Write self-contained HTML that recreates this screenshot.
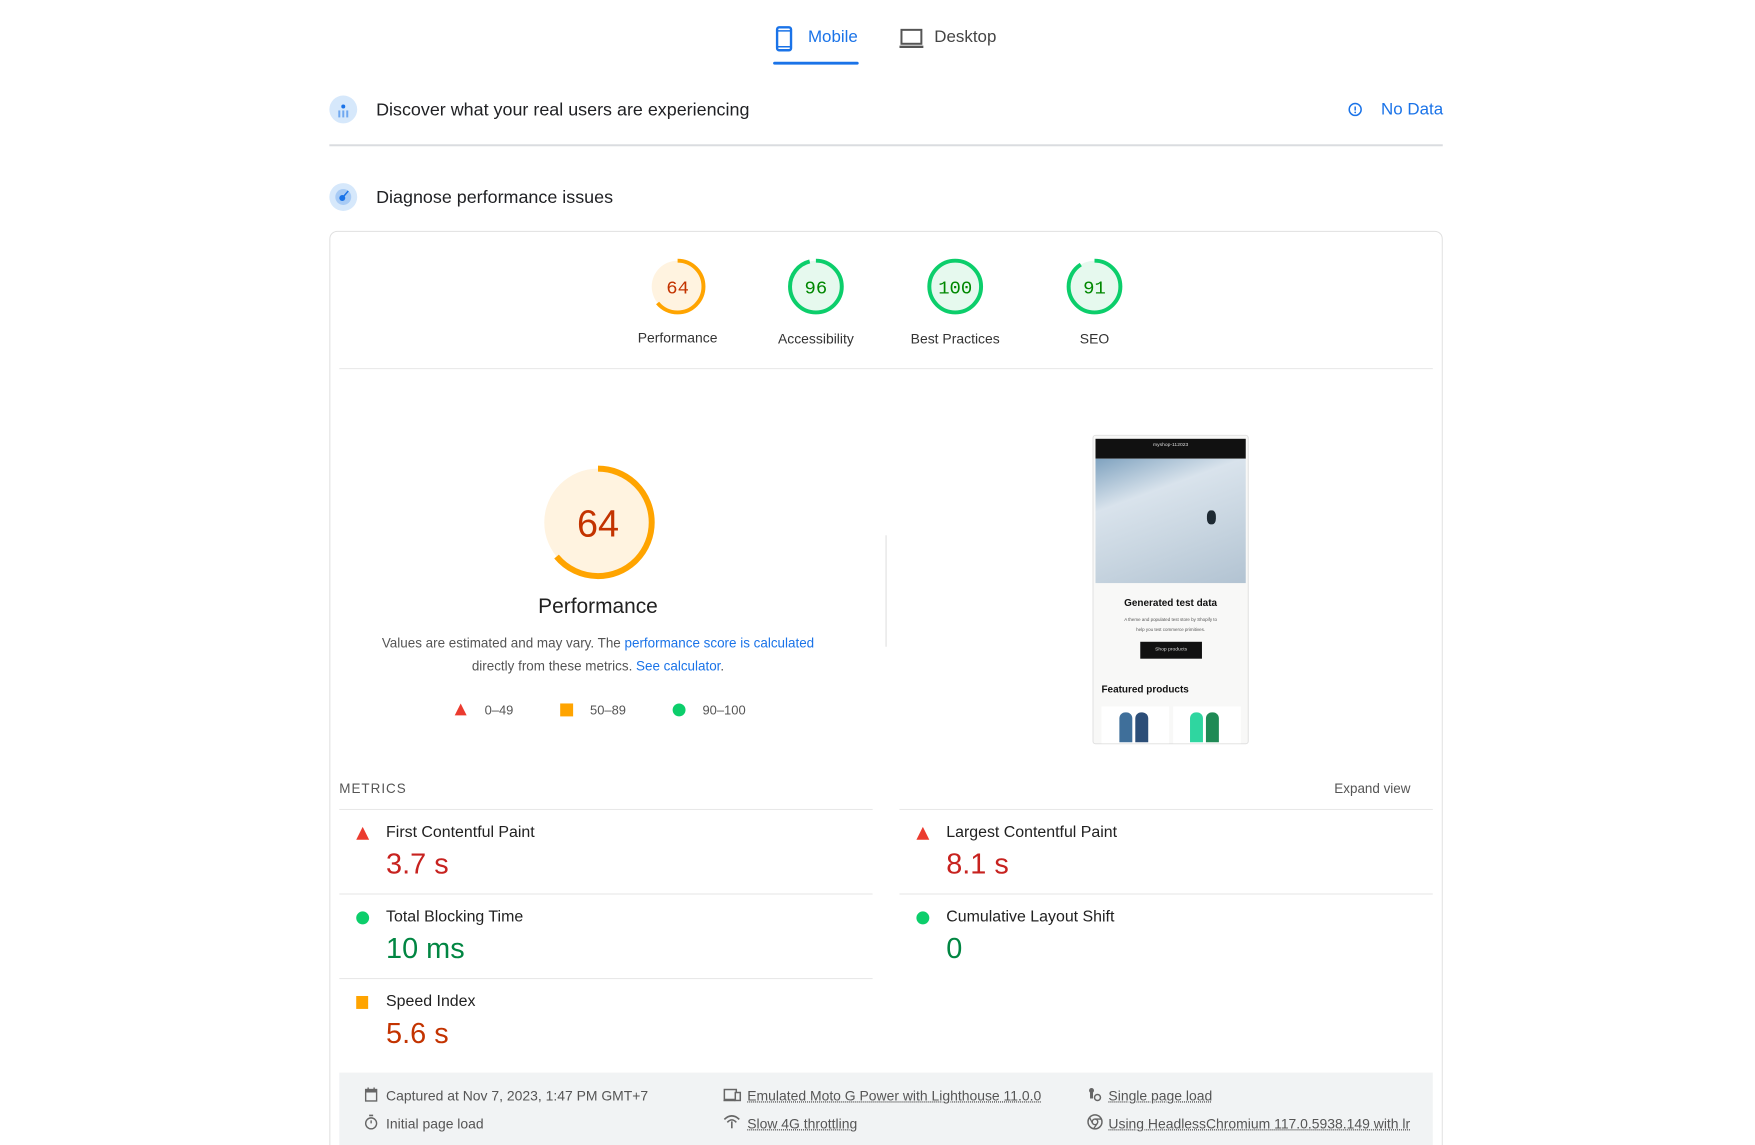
<!DOCTYPE html>
<html style="width:1755px;height:1145px;overflow:hidden"><head><meta charset="utf-8"><style>
*{margin:0;padding:0;box-sizing:border-box}
body{width:1755px;height:1145px;overflow:hidden;background:#fff;font-family:"Liberation Sans",Arial,sans-serif;color:#202124;position:relative}
#w{position:absolute;left:0;top:0;width:1765px;height:1151px;transform:scale(0.995);transform-origin:0 0}
.a{position:absolute;white-space:nowrap}
.lbl{font-size:14px;color:#333;transform:translateX(-50%)}
.mt{font-size:16px;color:#212121}
.mv{font-size:29px}
.hr{position:absolute;height:1px;background:#e6e6e6}
.ft{font-size:14px;color:#555}
.u{text-decoration:underline;text-decoration-style:dotted}
</style></head><body><div id="w">
<svg class="a" style="left:779px;top:26px" width="18" height="26" viewBox="0 0 18 26"><rect x="2" y="1.5" width="14" height="23" rx="2" fill="none" stroke="#1a73e8" stroke-width="2.4"/><line x1="2" y1="5" x2="16" y2="5" stroke="#1a73e8" stroke-width="1.5"/><line x1="2" y1="21" x2="16" y2="21" stroke="#1a73e8" stroke-width="1.5"/></svg>
<div class="a" style="left:812px;top:27px;font-size:17px;color:#1a73e8">Mobile</div>
<div class="a" style="left:777px;top:62px;width:86px;height:3px;background:#1a73e8;border-radius:2px"></div>
<svg class="a" style="left:903px;top:28px" width="26" height="22" viewBox="0 0 26 22"><rect x="3" y="2" width="20" height="14" fill="none" stroke="#555" stroke-width="2"/><line x1="1" y1="19" x2="25" y2="19" stroke="#555" stroke-width="2.4"/></svg>
<div class="a" style="left:939px;top:27px;font-size:17px;color:#444">Desktop</div>
<div class="a" style="left:331px;top:96px;width:28px;height:28px;border-radius:50%;background:#d6e8fb"></div>
<svg class="a" style="left:331px;top:96px" width="28" height="28"><circle cx="14" cy="11" r="2" fill="#1a73e8"/><rect x="9" y="15" width="2" height="7" fill="#6fa8f0"/><rect x="13" y="15" width="2" height="7" fill="#6fa8f0"/><rect x="17" y="15" width="2" height="7" fill="#6fa8f0"/></svg>
<div class="a" style="left:378px;top:100px;font-size:18px;color:#202124">Discover what your real users are experiencing</div>
<svg class="a" style="left:1354px;top:102px" width="16" height="16"><circle cx="8" cy="8" r="6" fill="none" stroke="#1a73e8" stroke-width="1.5"/><line x1="8" y1="5" x2="8" y2="9" stroke="#1a73e8" stroke-width="1.5"/><circle cx="8" cy="11" r="0.9" fill="#1a73e8"/></svg>
<div class="a" style="left:1388px;top:100px;font-size:17px;color:#1a73e8">No Data</div>
<div class="a" style="left:331px;top:145px;width:1119px;height:2px;background:#dadce0"></div>
<div class="a" style="left:331px;top:184px;width:28px;height:28px;border-radius:50%;background:#d6e8fb"></div>
<svg class="a" style="left:331px;top:184px" width="28" height="28"><circle cx="14" cy="14" r="8" fill="#a8cbf5"/><circle cx="13" cy="15" r="3" fill="#1a73e8"/><line x1="13" y1="15" x2="19" y2="8" stroke="#1a73e8" stroke-width="1.5"/></svg>
<div class="a" style="left:378px;top:188px;font-size:18px;color:#202124">Diagnose performance issues</div>
<div class="a" style="left:331px;top:232px;width:1119px;height:940px;border:1px solid #e0e0e0;border-radius:8px"></div>
<svg class="a" style="left:0;top:0" width="1755" height="620">
<g font-family="Liberation Mono,monospace" font-size="19" text-anchor="middle">
<circle cx="681" cy="288" r="26" fill="#fff3e0"/><circle cx="681" cy="288" r="26" fill="none" stroke="#ffa400" stroke-width="4" stroke-dasharray="104.5 200" transform="rotate(-90 681 288)"/><text x="681" y="295" fill="#c33300">64</text>
<circle cx="820" cy="288" r="26" fill="#e6f9ee"/><circle cx="820" cy="288" r="26" fill="none" stroke="#0cce6b" stroke-width="4" stroke-dasharray="156.8 200" transform="rotate(-90 820 288)"/><text x="820" y="295" fill="#008800">96</text>
<circle cx="960" cy="288" r="26" fill="#e6f9ee"/><circle cx="960" cy="288" r="26" fill="none" stroke="#0cce6b" stroke-width="4"/><text x="960" y="295" fill="#008800">100</text>
<circle cx="1100" cy="288" r="26" fill="#e6f9ee"/><circle cx="1100" cy="288" r="26" fill="none" stroke="#0cce6b" stroke-width="4" stroke-dasharray="148.6 200" transform="rotate(-90 1100 288)"/><text x="1100" y="295" fill="#008800">91</text>
</g>
<circle cx="601" cy="525" r="54" fill="#fff3e0"/><circle cx="601" cy="525" r="54" fill="none" stroke="#ffa400" stroke-width="6" stroke-dasharray="217 400" transform="rotate(-90 601 525)"/>
<text x="601" y="539" text-anchor="middle" font-family="Liberation Sans,sans-serif" font-size="38" fill="#c33300">64</text>
</svg>
<div class="a lbl" style="left:681px;top:331px">Performance</div>
<div class="a lbl" style="left:820px;top:332px">Accessibility</div>
<div class="a lbl" style="left:960px;top:332px">Best Practices</div>
<div class="a lbl" style="left:1100px;top:332px">SEO</div>
<div class="hr" style="left:341px;top:370px;width:1099px"></div>
<div class="a" style="left:601px;top:598px;transform:translateX(-50%);font-size:21px;color:#212121">Performance</div>
<div class="a" style="left:601px;top:639px;transform:translateX(-50%);font-size:13.5px;color:#555">Values are estimated and may vary. The <span style="color:#1a73e8">performance score is calculated</span></div>
<div class="a" style="left:601px;top:662px;transform:translateX(-50%);font-size:13.5px;color:#555">directly from these metrics. <span style="color:#1a73e8">See calculator</span>.</div>
<svg class="a" style="left:456px;top:706px" width="14" height="14"><polygon points="7,1 13,13 1,13" fill="#eb3b2f"/></svg>
<div class="a" style="left:487px;top:706px;font-size:13px;color:#555">0–49</div>
<div class="a" style="left:563px;top:707px;width:13px;height:13px;background:#ffa400"></div>
<div class="a" style="left:593px;top:706px;font-size:13px;color:#555">50–89</div>
<div class="a" style="left:676px;top:707px;width:13px;height:13px;border-radius:50%;background:#0cce6b"></div>
<div class="a" style="left:706px;top:706px;font-size:13px;color:#555">90–100</div>
<div class="a" style="left:890px;top:538px;width:1px;height:112px;background:#ddd"></div>
<div class="a" style="left:1098px;top:437px;width:157px;height:311px;border:1px solid #e0e0e0;border-radius:3px;background:#f8f8f7;overflow:hidden">
 <div class="a" style="left:2px;top:3px;width:151px;height:20px;background:#111"></div>
 <div class="a" style="left:0;top:6px;width:155px;text-align:center;font-size:5px;color:#ddd">myshop-112023</div>
 <div class="a" style="left:2px;top:23px;width:151px;height:125px;background:linear-gradient(160deg,#7fa2bf 0%,#d9e3ec 30%,#c9d6e1 60%,#b2c3d2 100%)"></div>
 <div class="a" style="left:114px;top:75px;width:9px;height:14px;background:#1e2a33;border-radius:40%"></div>
 <div class="a" style="left:0;top:163px;width:155px;text-align:center;font-size:10px;font-weight:bold;color:#111">Generated test data</div>
 <div class="a" style="left:0;top:180px;width:155px;text-align:center;font-size:4.5px;color:#555;line-height:10px">A theme and populated test store by Shopify to<br>help you test commerce primitives.</div>
 <div class="a" style="left:47px;top:207px;width:62px;height:17px;background:#111"></div>
 <div class="a" style="left:47px;top:212px;width:62px;text-align:center;font-size:5px;color:#ddd">Shop products</div>
 <div class="a" style="left:8px;top:250px;font-size:10px;font-weight:bold;color:#111">Featured products</div>
 <div class="a" style="left:8px;top:272px;width:68px;height:40px;background:#fff"></div>
 <div class="a" style="left:80px;top:272px;width:68px;height:40px;background:#fff"></div>
 <div class="a" style="left:26px;top:278px;width:13px;height:30px;border-radius:6px 6px 0 0;background:#3f6f9a"></div>
 <div class="a" style="left:42px;top:278px;width:13px;height:30px;border-radius:6px 6px 0 0;background:#2c4e78"></div>
 <div class="a" style="left:97px;top:278px;width:13px;height:30px;border-radius:6px 6px 0 0;background:#2fd6a0"></div>
 <div class="a" style="left:113px;top:278px;width:13px;height:30px;border-radius:6px 6px 0 0;background:#1f8a55"></div>
</div>
<div class="a" style="left:341px;top:785px;font-size:13.5px;color:#555;letter-spacing:1px">METRICS</div>
<div class="a" style="left:1341px;top:785px;font-size:13.5px;color:#555">Expand view</div>
<div class="hr" style="left:341px;top:813px;width:536px"></div>
<div class="hr" style="left:904px;top:813px;width:536px"></div>
<div class="hr" style="left:341px;top:898px;width:536px"></div>
<div class="hr" style="left:904px;top:898px;width:536px"></div>
<div class="hr" style="left:341px;top:983px;width:536px"></div>
<svg class="a" style="left:357px;top:830px" width="15" height="15"><polygon points="7.5,1 14,14 1,14" fill="#eb3b2f"/></svg>
<div class="a mt" style="left:388px;top:828px">First Contentful Paint</div>
<div class="a mv" style="left:388px;top:853px;color:#c7221f">3.7 s</div>
<svg class="a" style="left:920px;top:830px" width="15" height="15"><polygon points="7.5,1 14,14 1,14" fill="#eb3b2f"/></svg>
<div class="a mt" style="left:951px;top:828px">Largest Contentful Paint</div>
<div class="a mv" style="left:951px;top:853px;color:#c7221f">8.1 s</div>
<div class="a" style="left:358px;top:916px;width:13px;height:13px;border-radius:50%;background:#0cce6b"></div>
<div class="a mt" style="left:388px;top:913px">Total Blocking Time</div>
<div class="a mv" style="left:388px;top:938px;color:#018642">10 ms</div>
<div class="a" style="left:921px;top:916px;width:13px;height:13px;border-radius:50%;background:#0cce6b"></div>
<div class="a mt" style="left:951px;top:913px">Cumulative Layout Shift</div>
<div class="a mv" style="left:951px;top:938px;color:#018642">0</div>
<div class="a" style="left:358px;top:1001px;width:12px;height:13px;background:#ffa400"></div>
<div class="a mt" style="left:388px;top:998px">Speed Index</div>
<div class="a mv" style="left:388px;top:1023px;color:#c33300">5.6 s</div>
<div class="a" style="left:341px;top:1078px;width:1099px;height:80px;background:#f1f3f4"></div>
<svg class="a" style="left:366px;top:1092px" width="14" height="16"><rect x="1.5" y="3" width="11" height="11.5" fill="none" stroke="#666" stroke-width="1.4"/><rect x="1.5" y="3" width="11" height="3" fill="#666"/><line x1="4" y1="1" x2="4" y2="4" stroke="#666" stroke-width="1.4"/><line x1="10" y1="1" x2="10" y2="4" stroke="#666" stroke-width="1.4"/></svg>
<div class="a ft" style="left:388px;top:1093px">Captured at Nov 7, 2023, 1:47 PM GMT+7</div>
<svg class="a" style="left:366px;top:1119px" width="14" height="17"><circle cx="7" cy="10" r="5.5" fill="none" stroke="#666" stroke-width="1.4"/><line x1="5" y1="2" x2="9" y2="2" stroke="#666" stroke-width="1.6"/><line x1="7" y1="10" x2="7" y2="7" stroke="#666" stroke-width="1.4"/></svg>
<div class="a ft" style="left:388px;top:1121px">Initial page load</div>
<svg class="a" style="left:727px;top:1093px" width="19" height="15"><rect x="1" y="2" width="12" height="10" fill="none" stroke="#666" stroke-width="1.5"/><rect x="12" y="5" width="5" height="8" fill="#f1f3f4" stroke="#666" stroke-width="1.5"/><line x1="0" y1="13" x2="12" y2="13" stroke="#666" stroke-width="1.5"/></svg>
<div class="a ft u" style="left:751px;top:1093px">Emulated Moto G Power with Lighthouse 11.0.0</div>
<svg class="a" style="left:727px;top:1119px" width="17" height="15"><path d="M1 6 Q8.5 -1 16 6" fill="none" stroke="#666" stroke-width="1.6"/><path d="M4 9 Q8.5 4 13 9" fill="none" stroke="#666" stroke-width="1.6"/><line x1="8.5" y1="8" x2="8.5" y2="15" stroke="#666" stroke-width="1.6"/></svg>
<div class="a ft u" style="left:751px;top:1121px">Slow 4G throttling</div>
<svg class="a" style="left:1092px;top:1092px" width="16" height="16"><circle cx="5" cy="4" r="2.5" fill="#666"/><rect x="3.5" y="6" width="3" height="6" fill="#666"/><circle cx="11" cy="11" r="3" fill="none" stroke="#666" stroke-width="1.5"/></svg>
<div class="a ft u" style="left:1114px;top:1093px">Single page load</div>
<svg class="a" style="left:1092px;top:1119px" width="17" height="17"><circle cx="8.5" cy="8.5" r="7" fill="none" stroke="#666" stroke-width="1.5"/><circle cx="8.5" cy="8.5" r="2.8" fill="none" stroke="#666" stroke-width="1.4"/><line x1="8.5" y1="5.7" x2="15" y2="5.7" stroke="#666" stroke-width="1.3"/><line x1="6" y1="10" x2="3" y2="4" stroke="#666" stroke-width="1.3"/><line x1="10.5" y1="10.5" x2="7" y2="15.5" stroke="#666" stroke-width="1.3"/></svg>
<div class="a ft u" style="left:1114px;top:1121px;width:304px;overflow:hidden">Using HeadlessChromium 117.0.5938.149 with lr</div>
</div></body></html>
